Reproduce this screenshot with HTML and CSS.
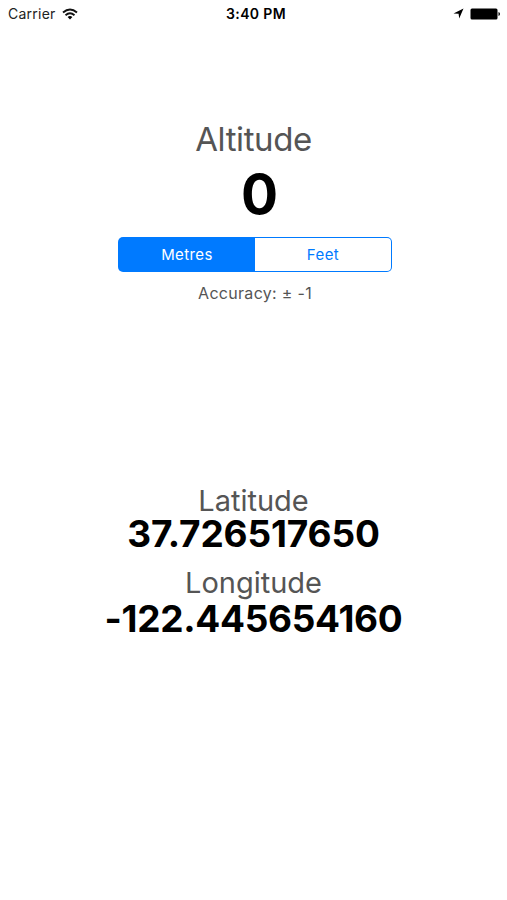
FILE: index.html
```html
<!DOCTYPE html>
<html lang="en">
<head>
<meta charset="utf-8">
<title>Altitude</title>
<link rel="stylesheet" href="styles.css">
</head>
<body>
<header class="status">
  <div class="carrier"><span class="carrier-name">Carrier</span>
    <svg class="wifi" viewBox="0 0 16 12" width="16" height="12"><g fill="none" stroke="#111" stroke-width="1.9"><path d="M1 4.5Q8 -1.7 15 4.5"/><path d="M3.5 7.2Q8 3.4 12.5 7.2"/></g><path d="M5.6 9Q8 7.2 10.4 9L8 11.5Z"/></svg>
  </div>
  <time class="clock">3:40 PM</time>
  <div class="indicators">
    <svg width="11" height="11" viewBox="0 0 11 11"><path d="M10.5 .5L6.2 10.5L5.6 5.8L.5 5.6Z"/></svg>
    <svg width="31" height="12" viewBox="0 0 31 12"><rect x=".5" y=".5" width="27" height="11" rx="1.5"/><path d="M28.5 4Q30 4.5 30 6T28.5 8Z"/></svg>
  </div>
</header>
<main>
  <section class="altitude">
    <h1 class="title">Altitude</h1>
    <div class="altitude-value">0</div>
    <div class="segments"><button class="segment selected">Metres</button><button class="segment">Feet</button></div>
    <p class="accuracy">Accuracy: ± -1</p>
  </section>
  <section class="position">
    <h2 class="label">Latitude</h2>
    <div class="coordinate latitude">37.726517650</div>
    <h2 class="label">Longitude</h2>
    <div class="coordinate longitude">-122.445654160</div>
  </section>
</main>
</body>
</html>
```
FILE: styles.css
```css
* { box-sizing: border-box; }
body { margin: 0; width: 507px; height: 900px; overflow: hidden; background: #fff; color: #000; font-family: Inter, sans-serif; }
h1, h2, p { margin: 0; font-weight: 400; }
.status { height: 27px; padding: 0 6px 0 8px; display: grid; grid-template-columns: 1fr auto 1fr; align-items: center; font-size: 14px; }
.carrier, .indicators { display: flex; align-items: center; gap: 6px; }
.carrier-name { letter-spacing: .25px; color: #222; }
.indicators { justify-content: flex-end; }
.clock { font-weight: 600; letter-spacing: .35px; padding-left: 3px; }
.altitude, .position { display: flex; flex-direction: column; align-items: center; }
.altitude { padding-top: 91px; }
.title { font-size: 33px; line-height: 42px; letter-spacing: -.4px; color: #555; }
.altitude-value { font-size: 55px; line-height: 68px; font-weight: 700; padding-left: 12px; }
.segments { display: flex; width: 274px; height: 35px; margin: 9px 0 0 3px; background: #007aff; padding: 1px; border-radius: 5px; }
.segment { flex: 1; border: 0; border-radius: 0 4px 4px 0; padding: 0; font: 400 15px Inter, sans-serif; letter-spacing: .4px; color: #007aff; background: #fff; }
.selected { color: #fff; background: #007aff; border-radius: 4px 0 0 4px; }
.accuracy { margin: 11px 0 0 3px; line-height: 20px; font-size: 16px; letter-spacing: .3px; color: #555; }
.position { padding-top: 183px; }
.label { font-size: 29px; line-height: 30px; color: #555; }
.coordinate { font-size: 37px; line-height: 36px; font-weight: 700; letter-spacing: -.15px; }
.latitude { margin-bottom: 16px; }
.longitude { margin-top: 3px; letter-spacing: -.3px; }
```
